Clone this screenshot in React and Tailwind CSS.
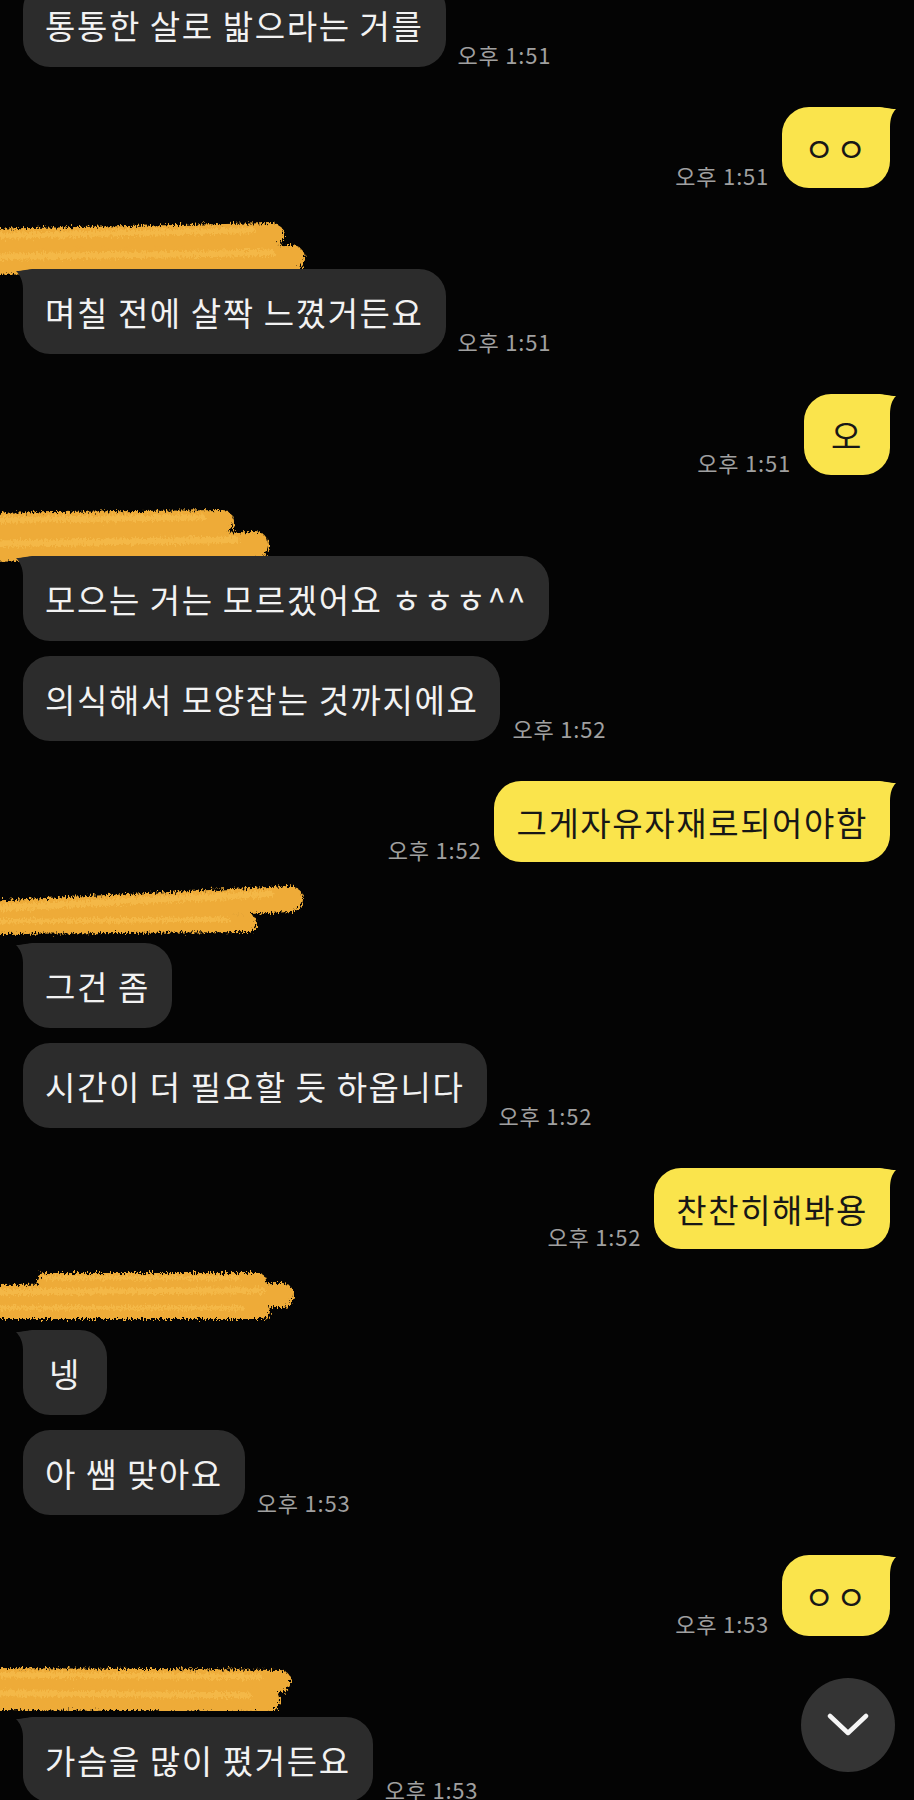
import React from "react";

const font = "font-['Noto_Sans_CJK_KR','Noto_Sans',sans-serif]";

const scribbles = [
  { top: -9, h: 60, strokes: [[-15, 17, 272, 11, 24], [-15, 38, 292, 34, 26]] },
  { top: -9, h: 62, strokes: [[-15, 14, 222, 11, 24], [-15, 38, 256, 34, 26]] },
  { top: -21, h: 52, strokes: [[-15, 28, 290, 13, 26], [-15, 39, 248, 37, 18]] },
  { top: -24, h: 56, strokes: [[45, 11, 258, 11, 16], [-15, 27, 282, 25, 24], [-15, 41, 262, 41, 16]] },
  { top: -15, h: 50, strokes: [[-15, 13, 280, 15, 22], [-15, 32, 268, 34, 24]] },
];

const items = [
  { side: "L", text: "통통한 살로 밟으라는 거를", time: "오후 1:51", start: true },
  { side: "R", text: "ㅇㅇ", time: "오후 1:51" },
  { side: "L", name: 0, text: "며칠 전에 살짝 느꼈거든요", time: "오후 1:51" },
  { side: "R", text: "오", time: "오후 1:51" },
  { side: "L", name: 1, text: "모으는 거는 모르겠어요 ㅎㅎㅎ^^" },
  { side: "L", same: true, text: "의식해서 모양잡는 것까지에요", time: "오후 1:52" },
  { side: "R", text: "그게자유자재로되어야함", time: "오후 1:52" },
  { side: "L", name: 2, text: "그건 좀" },
  { side: "L", same: true, text: "시간이 더 필요할 듯 하옵니다", time: "오후 1:52" },
  { side: "R", text: "찬찬히해봐용", time: "오후 1:52" },
  { side: "L", name: 3, text: "넹" },
  { side: "L", same: true, text: "아 쌤 맞아요", time: "오후 1:53" },
  { side: "R", text: "ㅇㅇ", time: "오후 1:53" },
  { side: "L", name: 4, text: "가슴을 많이 폈거든요", time: "오후 1:53" },
];

function Scribble({ index }) {
  const s = scribbles[index];
  return (
    <svg
      className="absolute left-0"
      style={{ top: s.top }}
      width="320"
      height={s.h + 10}
      viewBox={`0 -5 320 ${s.h + 10}`}
    >
      <defs>
        <filter id={`rough${index}`} x="-10%" y="-40%" width="120%" height="180%">
          <feTurbulence type="fractalNoise" baseFrequency="0.6 0.3" numOctaves="3" seed={index + 3} result="n" />
          <feDisplacementMap in="SourceGraphic" in2="n" scale="9" />
        </filter>
      </defs>
      <g filter={`url(#rough${index})`} strokeLinecap="round" fill="none">
        {s.strokes.map(([x1, y1, x2, y2, w], i) => (
          <line key={i} x1={x1} y1={y1} x2={x2} y2={y2} strokeWidth={w} stroke="#eeab38" />
        ))}
        {s.strokes.map(([x1, y1, x2, y2, w], i) => (
          <line key={`h${i}`} x1={x1} y1={y1 - w / 5} x2={x2 - 20} y2={y2 - w / 5} strokeWidth={w / 4} stroke="#f6bd4e" strokeOpacity="0.7" />
        ))}
      </g>
    </svg>
  );
}

function Time({ t }) {
  return (
    <span className={`${font} text-[22px] tracking-[0.8px] leading-none text-[#a0a0a0] whitespace-nowrap pb-[2px]`}>
      {t}
    </span>
  );
}

function LeftTail() {
  return (
    <svg className="absolute -left-[7px] top-0" width="40" height="32" viewBox="0 0 40 32">
      <path d="M0 2 C7 2 11 0 19 0 L40 0 L40 32 L7 32 L7 20 C7 12 4 6 0 2 Z" fill="#2c2c2c" />
    </svg>
  );
}

function RightTail() {
  return (
    <svg className="absolute -right-[6px] top-0" width="40" height="32" viewBox="0 0 40 32">
      <path d="M40 2 C33 2 29 0 21 0 L0 0 L0 32 L34 32 L34 20 C34 12 36 6 40 2 Z" fill="#fae44c" />
    </svg>
  );
}

function Message({ m }) {
  const gap = m.start ? "mt-[-18px]" : m.same ? "mt-[15px]" : "mt-[40px]";
  if (m.side === "R") {
    return (
      <div className={`${gap} flex items-end justify-end gap-[13px]`}>
        <Time t={m.time} />
        <div className="relative h-[81px] min-w-[86px] px-[22px] rounded-[27px] bg-[#fae44c] flex items-center justify-center">
          <RightTail />
          <span className={`${font} relative text-[33px] tracking-[1.6px] leading-[38px] text-[#171717] whitespace-nowrap`}>
            {m.text}
          </span>
        </div>
      </div>
    );
  }
  const hasName = m.name !== undefined;
  return (
    <div className={gap}>
      {hasName && (
        <div className="relative h-[41px] -ml-[23px]">
          <Scribble index={m.name} />
        </div>
      )}
      <div className="flex items-end gap-[12px]">
        <div className="relative h-[85px] min-w-[84px] px-[22px] rounded-[27px] bg-[#2c2c2c] flex items-center justify-center">
          {hasName && <LeftTail />}
          <span className={`${font} relative text-[33px] tracking-[1.6px] leading-[38px] text-[#f2f2f2] whitespace-nowrap`}>
            {m.text}
          </span>
        </div>
        {m.time && <Time t={m.time} />}
      </div>
    </div>
  );
}

export default function App() {
  return (
    <div className="relative w-[914px] h-[1800px] overflow-hidden bg-[#040404]">
      <div className="flex flex-col pl-[23px] pr-[24px]">
        {items.map((m, i) => (
          <Message key={i} m={m} />
        ))}
      </div>
      <button className="absolute bottom-[28px] right-[19px] w-[94px] h-[94px] rounded-full bg-[#343434] flex items-center justify-center">
        <svg width="42" height="24" viewBox="0 0 42 24">
          <polyline points="3,3 21,20 39,3" fill="none" stroke="#f5f5f5" strokeWidth="4.5" strokeLinecap="round" strokeLinejoin="round" />
        </svg>
      </button>
    </div>
  );
}
